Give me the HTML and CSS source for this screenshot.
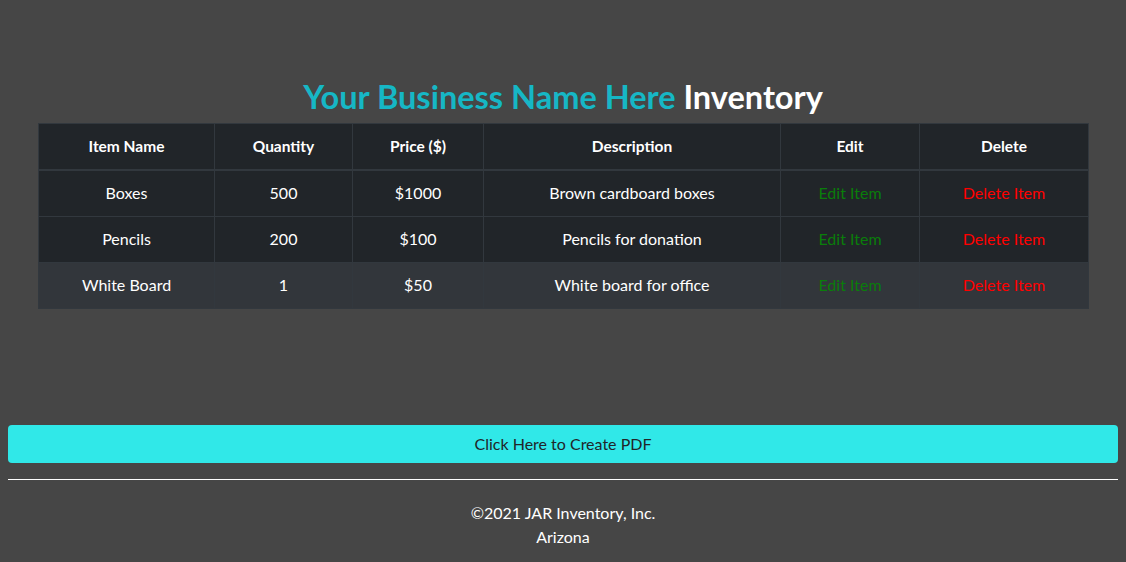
FILE: index.html
```html
<!DOCTYPE html>
<html lang="en">
<head>
<meta charset="utf-8">
<title>Inventory</title>
<link rel="stylesheet" href="styles.css">
</head>
<body>
<main class="page">
  <h1 class="title"><span class="brand">Your Business Name Here</span> Inventory</h1>
  <table class="inv">
    <colgroup>
      <col class="c-name"><col class="c-qty"><col class="c-price"><col class="c-desc"><col class="c-edit"><col class="c-del">
    </colgroup>
    <thead>
      <tr><th>Item Name</th><th>Quantity</th><th>Price ($)</th><th>Description</th><th>Edit</th><th>Delete</th></tr>
    </thead>
    <tbody>
      <tr><td>Boxes</td><td>500</td><td>$1000</td><td>Brown cardboard boxes</td><td><a class="edit" href="#">Edit Item</a></td><td><a class="del" href="#">Delete Item</a></td></tr>
      <tr><td>Pencils</td><td>200</td><td>$100</td><td>Pencils for donation</td><td><a class="edit" href="#">Edit Item</a></td><td><a class="del" href="#">Delete Item</a></td></tr>
      <tr class="hl"><td>White Board</td><td>1</td><td>$50</td><td>White board for office</td><td><a class="edit" href="#">Edit Item</a></td><td><a class="del" href="#">Delete Item</a></td></tr>
    </tbody>
  </table>
</main>
<button class="pdf" type="button">Click Here to Create PDF</button>
<hr class="rule">
<footer class="foot">
  <p>©2021 JAR Inventory, Inc.</p>
  <p>Arizona</p>
</footer>
</body>
</html>
```
FILE: styles.css
```css
html, body {
  margin: 0;
  padding: 0;
}
body {
  background: #464646;
  color: #fff;
  font-family: Lato, "Open Sans", sans-serif;
  font-size: 16px;
  line-height: 24px;
  padding: 0 8px;
}
.page {
  padding: 77px 30px 0;
}
.title {
  margin: 0 0 6px;
  text-align: center;
  font-size: 32.5px;
  line-height: 40px;
  font-weight: 700;
  color: #fff;
}
.brand {
  color: #16b7c5;
}
.inv {
  width: 100%;
  border-collapse: collapse;
  background: #212529;
  border: 1px solid #32383e;
  table-layout: fixed;
}
.c-name { width: 176px; }
.c-qty { width: 138px; }
.c-price { width: 131px; }
.c-desc { width: 297px; }
.c-edit { width: 139px; }
.c-del { width: 169px; }
.inv th, .inv td {
  border: 1px solid #32383e;
  text-align: center;
  vertical-align: middle;
  padding: 0 8px 1px;
  height: 44px;
}
.inv th {
  font-weight: 700;
  font-size: 15.5px;
  border-bottom-width: 2px;
}
.inv tr.hl td {
  background: #32363b;
}
.edit {
  color: #0a7d0a;
  text-decoration: none;
}
.del {
  color: #ff0000;
  text-decoration: none;
}
.pdf {
  display: block;
  width: 100%;
  margin-top: 116px;
  height: 38px;
  border: 0;
  border-radius: 4px;
  background: #30e8e8;
  color: #212529;
  font-family: Lato, "Open Sans", sans-serif;
  font-size: 16px;
  padding: 0 0 1px;
}
.rule {
  margin: 16px 0 0;
  border: 0;
  border-top: 1px solid #fff;
}
.foot {
  text-align: center;
  padding-top: 21px;
}
.foot p {
  margin: 0;
  line-height: 24px;
}
```
